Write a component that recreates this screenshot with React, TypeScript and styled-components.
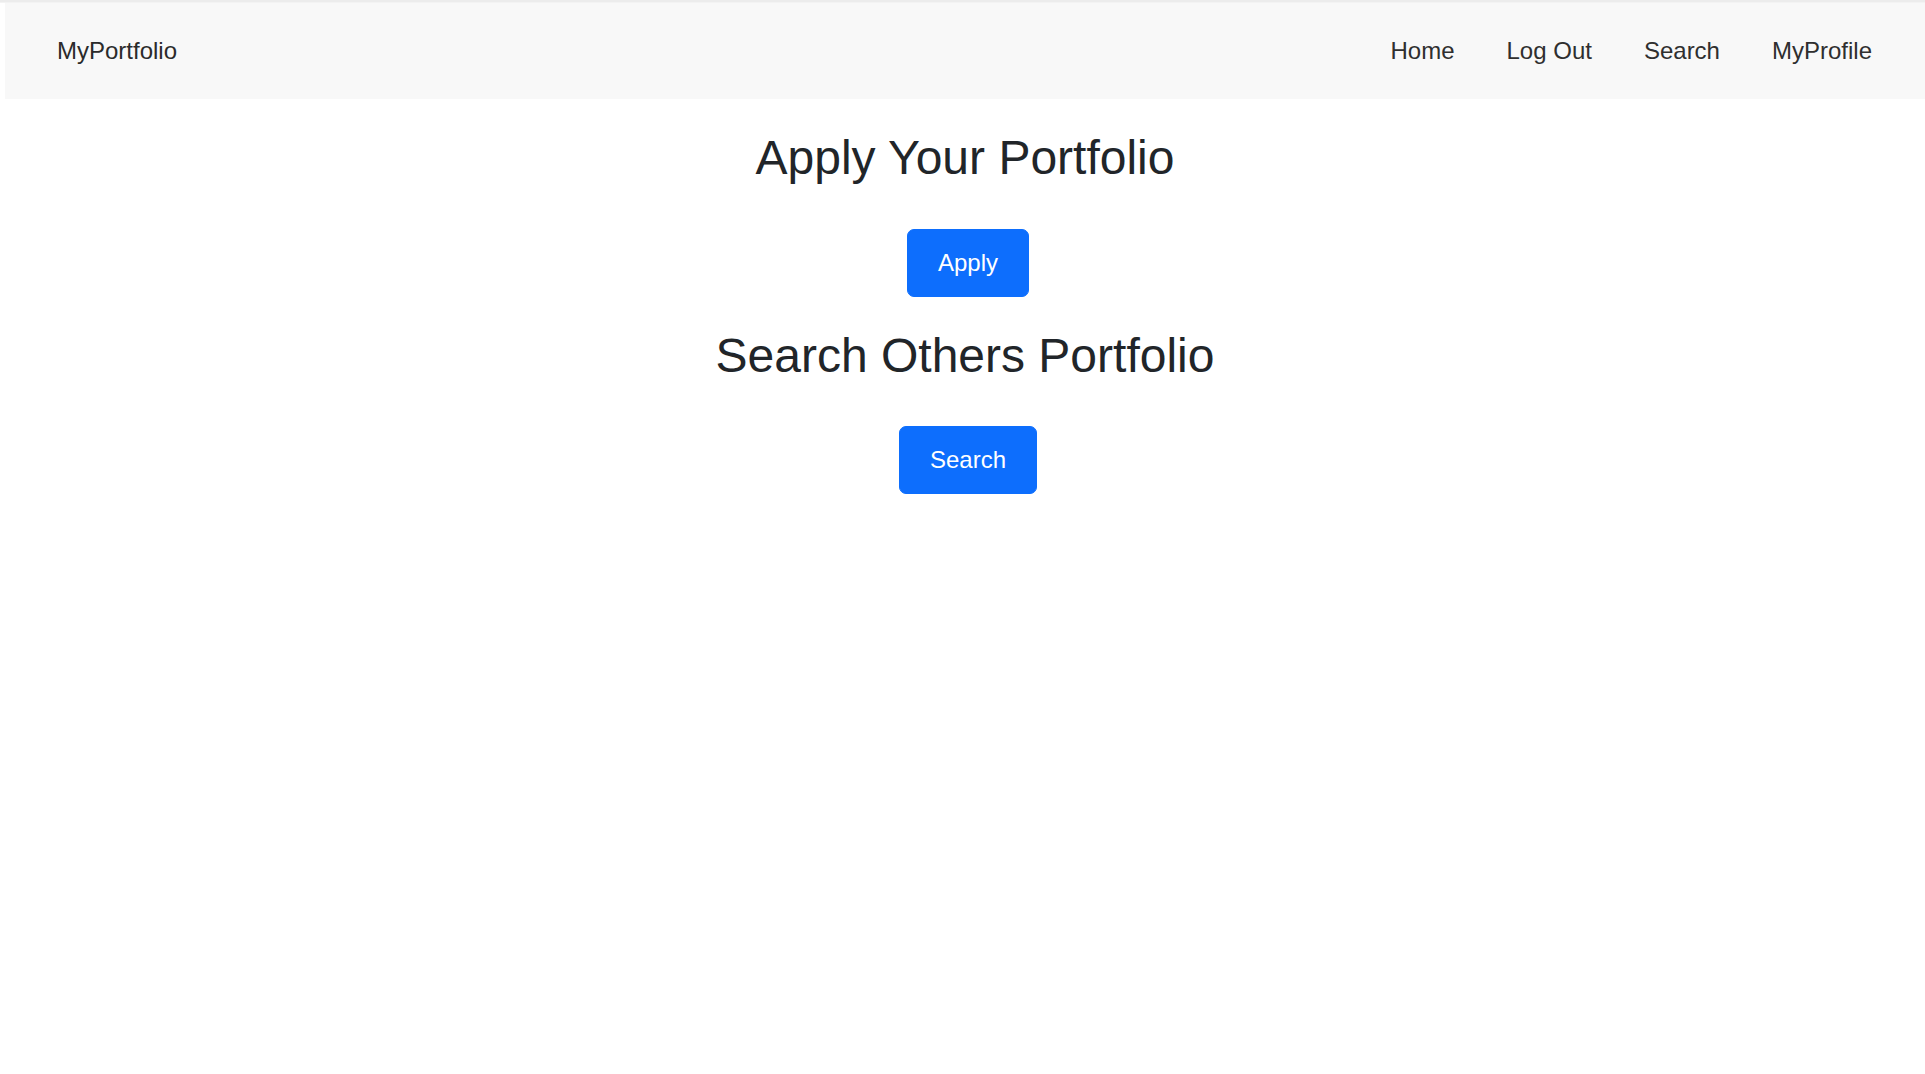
import React from "react";
import styled, { createGlobalStyle } from "styled-components";

const GlobalStyle = createGlobalStyle`
  html, body {
    margin: 0;
    padding: 0;
    background: #ffffff;
    font-family: "Liberation Sans", Arial, sans-serif;
    color: #212529;
  }
  * { box-sizing: border-box; }
`;

const TopEdge = styled.div`
  height: 3px;
  background: #ececec;
  border-bottom: 1px solid #f3f3f3;
`;

const Page = styled.div`
  padding-left: 5px;
`;

const NavBar = styled.nav`
  height: 96px;
  background: #f8f8f8;
  display: flex;
  align-items: center;
  justify-content: space-between;
  padding: 0 27px 0 52px;
`;

const Brand = styled.a`
  font-size: 24px;
  color: #2b2b2b;
  text-decoration: none;
  line-height: 36px;
`;

const NavList = styled.div`
  display: flex;
  align-items: center;
`;

const NavLink = styled.a`
  font-size: 24px;
  color: #2f2f2f;
  text-decoration: none;
  padding: 0 26px;
  line-height: 36px;
`;

const Main = styled.main`
  display: flex;
  flex-direction: column;
  align-items: center;
`;

const Heading = styled.h1`
  font-size: 48px;
  font-weight: 400;
  line-height: 1.2;
  margin: 30px 0 42px;
  color: #212529;
`;

const PrimaryButton = styled.button`
  font-family: "Liberation Sans", Arial, sans-serif;
  font-size: 24px;
  line-height: 36px;
  color: #ffffff;
  background: #0d6efd;
  border: 1px solid #0d6efd;
  border-radius: 7px;
  padding: 15px 30px;
  margin-left: 6px;
  cursor: pointer;
`;

export default function App() {
  return (
    <>
      <GlobalStyle />
      <TopEdge />
      <Page>
        <NavBar>
          <Brand href="#">MyPortfolio</Brand>
          <NavList>
            <NavLink href="#">Home</NavLink>
            <NavLink href="#">Log Out</NavLink>
            <NavLink href="#">Search</NavLink>
            <NavLink href="#">MyProfile</NavLink>
          </NavList>
        </NavBar>
        <Main>
          <Heading>Apply Your Portfolio</Heading>
          <PrimaryButton>Apply</PrimaryButton>
          <Heading>Search Others Portfolio</Heading>
          <PrimaryButton>Search</PrimaryButton>
        </Main>
      </Page>
    </>
  );
}
